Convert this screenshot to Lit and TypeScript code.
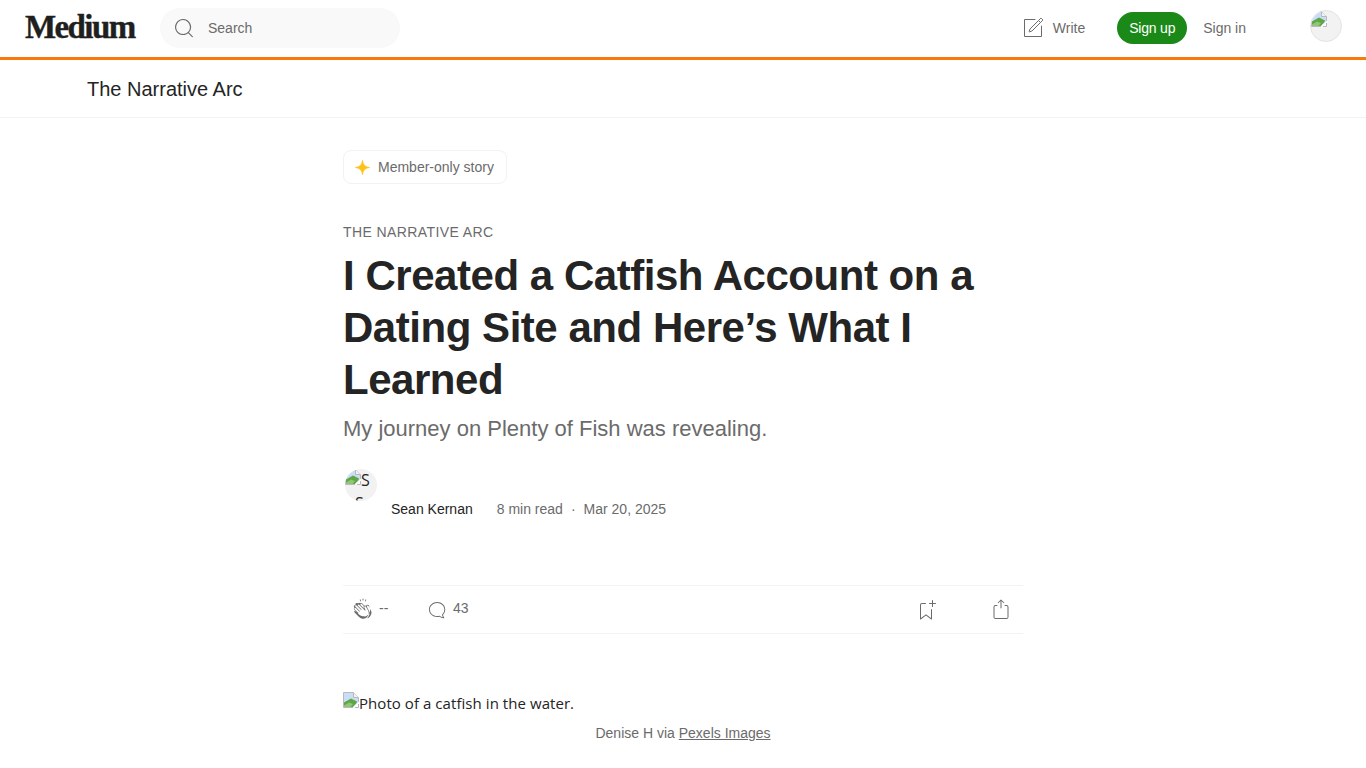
import { LitElement, html, css, svg } from "lit";
import { customElement } from "lit/decorators.js";

const brokenImg = () => svg`<svg class="broken" viewBox="0 0 16 16" width="16" height="16" aria-hidden="true">
  <path d="M.5 .5H10.5L15.5 5.5V15.5H.5Z" fill="#fff" stroke="#b9b9b9" stroke-width="1"/>
  <path d="M1 1H10.5V5.5H15V13H1Z" fill="#c9dcf8"/>
  <path d="M10.5 .5V5.5H15.5" fill="#f2f2f2" stroke="#b9b9b9" stroke-width="1"/>
  <path d="M1 15V10.5L8 6.5 14 9.5 13.5 11 10 15Z" fill="#5fa644"/>
  <path d="M1 13.5 6 10.5 10 12 7.5 15H1Z" fill="#8fc67a"/>
  <path d="M9.5 16 16 9.5V16Z" fill="#fff"/>
  <path d="M12 15.5H15.5V12" fill="none" stroke="#b9b9b9" stroke-width="1"/>
</svg>`;

@customElement("app-root")
export class AppRoot extends LitElement {
  static styles = css`
    :host { display: block; background: #fff; color: #242424; font-family: "Liberation Sans", Arial, sans-serif; height: 768px; overflow: hidden; }
    a { color: inherit; text-decoration: none; }
    .top { height: 57px; display: flex; align-items: center; padding: 0 24px 2px; box-sizing: border-box; }
    .logo { font-family: "Liberation Serif", serif; font-weight: 700; font-size: 33px; letter-spacing: -1.6px; color: #1f1f1f; width: 111px; margin-left: 1px; -webkit-text-stroke: .4px #1f1f1f; }
    .search { margin-left: 24px; width: 240px; height: 40px; border-radius: 20px; background: #f9f9f9; display: flex; align-items: center; padding-left: 12px; box-sizing: border-box; font-size: 14px; color: #6b6b6b; gap: 12px; }
    .spacer { flex: 1; }
    .write { display: flex; align-items: center; gap: 8px; font-size: 14px; color: #6b6b6b; margin-right: 32px; }
    .signup { background: #1a8917; color: #fff; font-size: 14px; letter-spacing: -.2px; height: 32px; width: 70px; border-radius: 16px; display: flex; align-items: center; justify-content: center; margin-right: 16px; }
    .signin { font-size: 14px; color: #6b6b6b; margin-right: 64px; }
    .avatar { width: 32px; height: 32px; border-radius: 50%; background: #f2f2f2; border: 1px solid #e4e4e4; box-sizing: border-box; overflow: hidden; line-height: 0; margin-top: -4px; }
    .orange { height: 3px; background: #f97a0c; }
    .pub { height: 56px; padding-top: 1px; border-bottom: 1px solid #f2f2f2; padding-left: 87px; font-size: 20px; line-height: 57px; color: #242424; }
    main { width: 680px; margin: 0 auto; }
    .badge { margin-top: 32px; display: inline-flex; align-items: center; height: 34px; box-sizing: border-box; padding: 0 12px 0 11px; border: 1px solid #f2f2f2; border-radius: 8px; gap: 8px; font-size: 14px; color: #6b6b6b; }
    .section { margin-top: 40px; font-size: 14px; line-height: 16px; letter-spacing: .4px; color: #6b6b6b; }
    h1 { margin: 10px 0 0; font-size: 42px; letter-spacing: -.462px; line-height: 52px; font-weight: 700; color: #242424; }
    .sub { margin-top: 9px; font-size: 22px; line-height: 28px; color: #6b6b6b; }
    .byline { display: flex; margin-top: 26px; height: 50px; font-size: 14px; color: #6b6b6b; }
    .face { width: 32px; height: 32px; margin-left: 2px; border-radius: 50%; background: #f2f2f2; overflow: hidden; flex: none; font-size: 16px; line-height: 23px; color: #242424; font-family: "Open Sans", sans-serif; }
    .face .broken { vertical-align: top; }
    .face-line { margin-left: 10px; }
    .meta { display: flex; align-items: center; height: 18px; margin-top: 31px; margin-left: 14px; line-height: 18px; }
    .name { color: #242424; margin-right: 24px; }
    .dot { margin: 0 8px; }
    .actions { margin-top: 66px; height: 47px; border-top: 1px solid #f2f2f2; border-bottom: 1px solid #f2f2f2; display: flex; align-items: center; font-size: 14px; color: #6b6b6b; }
    .clap { margin-left: 8px; display: flex; align-items: center; gap: 4px; width: 74px; }
    .comm { display: flex; align-items: center; gap: 4px; }
    .count { margin-bottom: 3px; }
    .right1 { margin-left: auto; line-height: 0; }
    .right2 { margin-left: 51px; margin-right: 10px; line-height: 0; }
    figure { margin: 57px 0 0; }
    .alt { font-family: "Open Sans", sans-serif; font-size: 15px; letter-spacing: .06px; line-height: 24px; color: #242424; display: flex; align-items: flex-start; height: 24px; }
    .alt .broken { margin-top: 1px; }
    figcaption { margin-top: 8px; text-align: center; font-size: 14px; line-height: 20px; color: #6b6b6b; }
    figcaption a { text-decoration: underline; }
  `;

  render() {
    return html`
      <header class="top">
        <div class="logo">Medium</div>
        <div class="search">
          <svg width="24" height="24" viewBox="0 0 24 24" fill="#6b6b6b"><path fill-rule="evenodd" d="M4.092 11.06a6.95 6.95 0 1 1 13.9 0 6.95 6.95 0 0 1-13.9 0m6.95-8.05a8.05 8.05 0 1 0 5.13 14.26l3.75 3.75a.56.56 0 1 0 .79-.79l-3.75-3.75A8.05 8.05 0 0 0 11.042 3z"/></svg>
          <span>Search</span>
        </div>
        <div class="spacer"></div>
        <a class="write">
          <svg width="24" height="24" viewBox="0 0 24 24" fill="none"><path fill="#6b6b6b" d="M14 4a.5.5 0 0 0 0-1zm7 6a.5.5 0 0 0-1 0zm-7-7H4v1h10zM3 4v16h1V4zm1 17h16v-1H4zm17-1V10h-1v10zm-1 1a1 1 0 0 0 1-1h-1zM3 20a1 1 0 0 0 1 1v-1zM4 3a1 1 0 0 0-1 1h1z"/><path stroke="#6b6b6b" d="M17.5 4.5l-8.458 8.458a.25.25 0 0 0-.06.098l-.824 2.47a.25.25 0 0 0 .316.316l2.47-.823a.25.25 0 0 0 .098-.06L19.5 6.5m-2-2 2.323-2.323a.25.25 0 0 1 .354 0l1.646 1.646a.25.25 0 0 1 0 .354L19.5 6.5m-2-2 2 2"/></svg>
          <span>Write</span>
        </a>
        <a class="signup">Sign up</a>
        <a class="signin">Sign in</a>
        <div class="avatar">${brokenImg()}</div>
      </header>
      <div class="orange"></div>
      <div class="pub">The Narrative Arc</div>
      <main>
        <div class="badge">
          <svg width="15" height="15" viewBox="0 0 16 16"><path d="M8 .5C8.6 5 10.6 7.2 15.5 8 10.6 8.8 8.6 11 8 15.5 7.4 11 5.4 8.8.5 8 5.4 7.2 7.4 5 8 .5Z" fill="#ffc017" stroke="#ffc017" stroke-width=".8"/></svg>
          <span>Member-only story</span>
        </div>
        <div class="section">THE NARRATIVE ARC</div>
        <h1>I Created a Catfish Account on a Dating Site and Here’s What I Learned</h1>
        <div class="sub">My journey on Plenty of Fish was revealing.</div>
        <div class="byline">
          <div class="face">${brokenImg()}S<div class="face-line">Se</div></div>
          <div class="meta">
            <span class="name">Sean Kernan</span>
            <span>8 min read</span><span class="dot">·</span><span>Mar 20, 2025</span>
          </div>
        </div>
        <div class="actions">
          <div class="clap">
            <svg width="24" height="24" viewBox="0 0 24 24" fill="#6b6b6b"><path fill-rule="evenodd" d="M11.37.828 12 3.282l.63-2.454zM13.916 3.953l1.523-2.112-1.184-.39zM8.589 1.84l1.522 2.112-.337-2.501zM18.523 18.92c-.86.86-1.75 1.246-2.62 1.33a6 6 0 0 0 .407-.372c2.388-2.389 2.86-4.951 1.399-7.623l-.912-1.603-.79-1.672c-.26-.56-.194-.98.203-1.288a.7.7 0 0 1 .546-.132c.283.046.546.231.728.5l2.363 4.157c.976 1.624 1.141 4.237-1.324 6.702m-10.999-.438L3.37 14.328a.828.828 0 0 1 .585-1.408.83.83 0 0 1 .585.242l2.158 2.157a.365.365 0 0 0 .516-.516l-2.157-2.158-1.449-1.449a.826.826 0 0 1 1.167-1.17l3.438 3.44a.363.363 0 0 0 .516 0 .364.364 0 0 0 0-.516L5.293 9.513l-.97-.97a.826.826 0 0 1 0-1.166.84.84 0 0 1 1.167 0l.97.968 3.437 3.436a.36.36 0 0 0 .517 0 .366.366 0 0 0 0-.516L6.977 7.83a.82.82 0 0 1-.241-.584.82.82 0 0 1 .824-.826c.219 0 .43.087.584.242l5.787 5.787a.366.366 0 0 0 .587-.415l-1.117-2.363c-.26-.56-.194-.98.204-1.289a.7.7 0 0 1 .546-.132c.283.046.545.232.727.501l2.193 3.86c1.302 2.38.883 4.59-1.277 6.75-1.156 1.156-2.602 1.627-4.19 1.367-1.418-.236-2.866-1.033-4.079-2.246M10.75 5.971l2.12 2.12c-.41.502-.465 1.17-.128 1.89l.22.465-3.523-3.523a.8.8 0 0 1-.097-.368c0-.22.086-.428.241-.584a.847.847 0 0 1 1.167 0m7.355 1.705c-.31-.461-.746-.758-1.23-.837a1.44 1.44 0 0 0-1.11.275c-.312.24-.505.543-.59.881a1.74 1.74 0 0 0-.906-.465 1.47 1.47 0 0 0-.82.106l-2.182-2.182c-.618-.618-1.479-.683-2.154-.2a1.5 1.5 0 0 0-1.019-.4 1.54 1.54 0 0 0-1.18.553c-.55-.59-1.472-.593-2.012-.052a1.56 1.56 0 0 0-.46 1.11c0 .157.02.31.067.456a1.56 1.56 0 0 0-1.224 2.63 1.55 1.55 0 0 0-.21 1.962l4.146 4.153c1.37 1.37 3.028 2.262 4.67 2.535q.58.096 1.132.08c1.134.46 2.494.2 3.854-1.16 2.894-2.894 2.596-6.016 1.47-7.89z"/></svg>
            <span class="count">--</span>
          </div>
          <div class="comm">
            <svg width="24" height="24" viewBox="0 0 24 24" fill="#6b6b6b"><path fill-rule="evenodd" d="M18.006 16.803c1.533-1.456 2.234-3.325 2.234-5.321C20.24 7.357 16.709 4 12.191 4S4 7.357 4 11.482c0 4.126 3.674 7.482 8.191 7.482.817 0 1.622-.111 2.393-.327.231.2.48.391.744.559 1.06.693 2.203 1.044 3.399 1.044.224-.008.4-.112.486-.287a.49.49 0 0 0-.042-.518c-.495-.67-.845-1.364-1.04-2.057a4 4 0 0 1-.125-.598zm-3.122 1.055-.067-.223-.315.096a8 8 0 0 1-2.311.338c-4.023 0-7.292-2.955-7.292-6.587 0-3.633 3.269-6.588 7.292-6.588 4.014 0 7.112 2.958 7.112 6.593 0 1.794-.608 3.469-2.027 4.72l-.195.168v.255c0 .056 0 .151.016.295.025.231.081.478.154.733.154.558.398 1.117.722 1.659a5.3 5.3 0 0 1-2.165-.845c-.276-.176-.714-.383-.941-.59z"/></svg>
            <span class="count">43</span>
          </div>
          <div class="right1">
            <svg width="24" height="24" viewBox="0 0 24 24" fill="#6b6b6b"><path d="M18 2.5a.5.5 0 0 1 1 0V5h2.5a.5.5 0 0 1 0 1H19v2.5a.5.5 0 1 1-1 0V6h-2.5a.5.5 0 0 1 0-1H18zM7 7a1 1 0 0 1 1-1h3.5a.5.5 0 0 0 0-1H8a2 2 0 0 0-2 2v14a.5.5 0 0 0 .805.396L12 17.396l5.195 4A.5.5 0 0 0 18 21v-9.5a.5.5 0 0 0-1 0v8.485l-4.695-3.61a.5.5 0 0 0-.61 0L7 19.985z"/></svg>
          </div>
          <div class="right2">
            <svg width="24" height="24" viewBox="0 0 24 24" fill="#6b6b6b"><path d="M15.218 4.931a.4.4 0 0 1-.118.132l.012.006a.45.45 0 0 1-.292.074.5.5 0 0 1-.3-.13l-2.02-2.02v7.07c0 .28-.23.5-.5.5s-.5-.22-.5-.5v-7.04l-2 2a.45.45 0 0 1-.57.04h-.02a.4.4 0 0 1-.16-.3.4.4 0 0 1 .1-.32l2.8-2.8a.5.5 0 0 1 .7 0l2.8 2.79a.42.42 0 0 1 .068.498zM16 7.063h1.5a2 2 0 0 1 2 2v10a2 2 0 0 1-2 2h-11c-1.1 0-2-.9-2-2v-10a2 2 0 0 1 2-2H8a.5.5 0 0 1 .35.15.5.5 0 0 1 .15.35.5.5 0 0 1-.15.35.5.5 0 0 1-.35.15H6.4c-.5 0-.9.4-.9.9v10.2a.9.9 0 0 0 .9.9h11.2c.5 0 .9-.4.9-.9v-10.2c0-.5-.4-.9-.9-.9H16a.5.5 0 0 1 0-1"/></svg>
          </div>
        </div>
        <figure>
          <div class="alt">${brokenImg()}<span>Photo of a catfish in the water.</span></div>
          <figcaption>Denise H via <a>Pexels Images</a></figcaption>
        </figure>
      </main>
    `;
  }
}
